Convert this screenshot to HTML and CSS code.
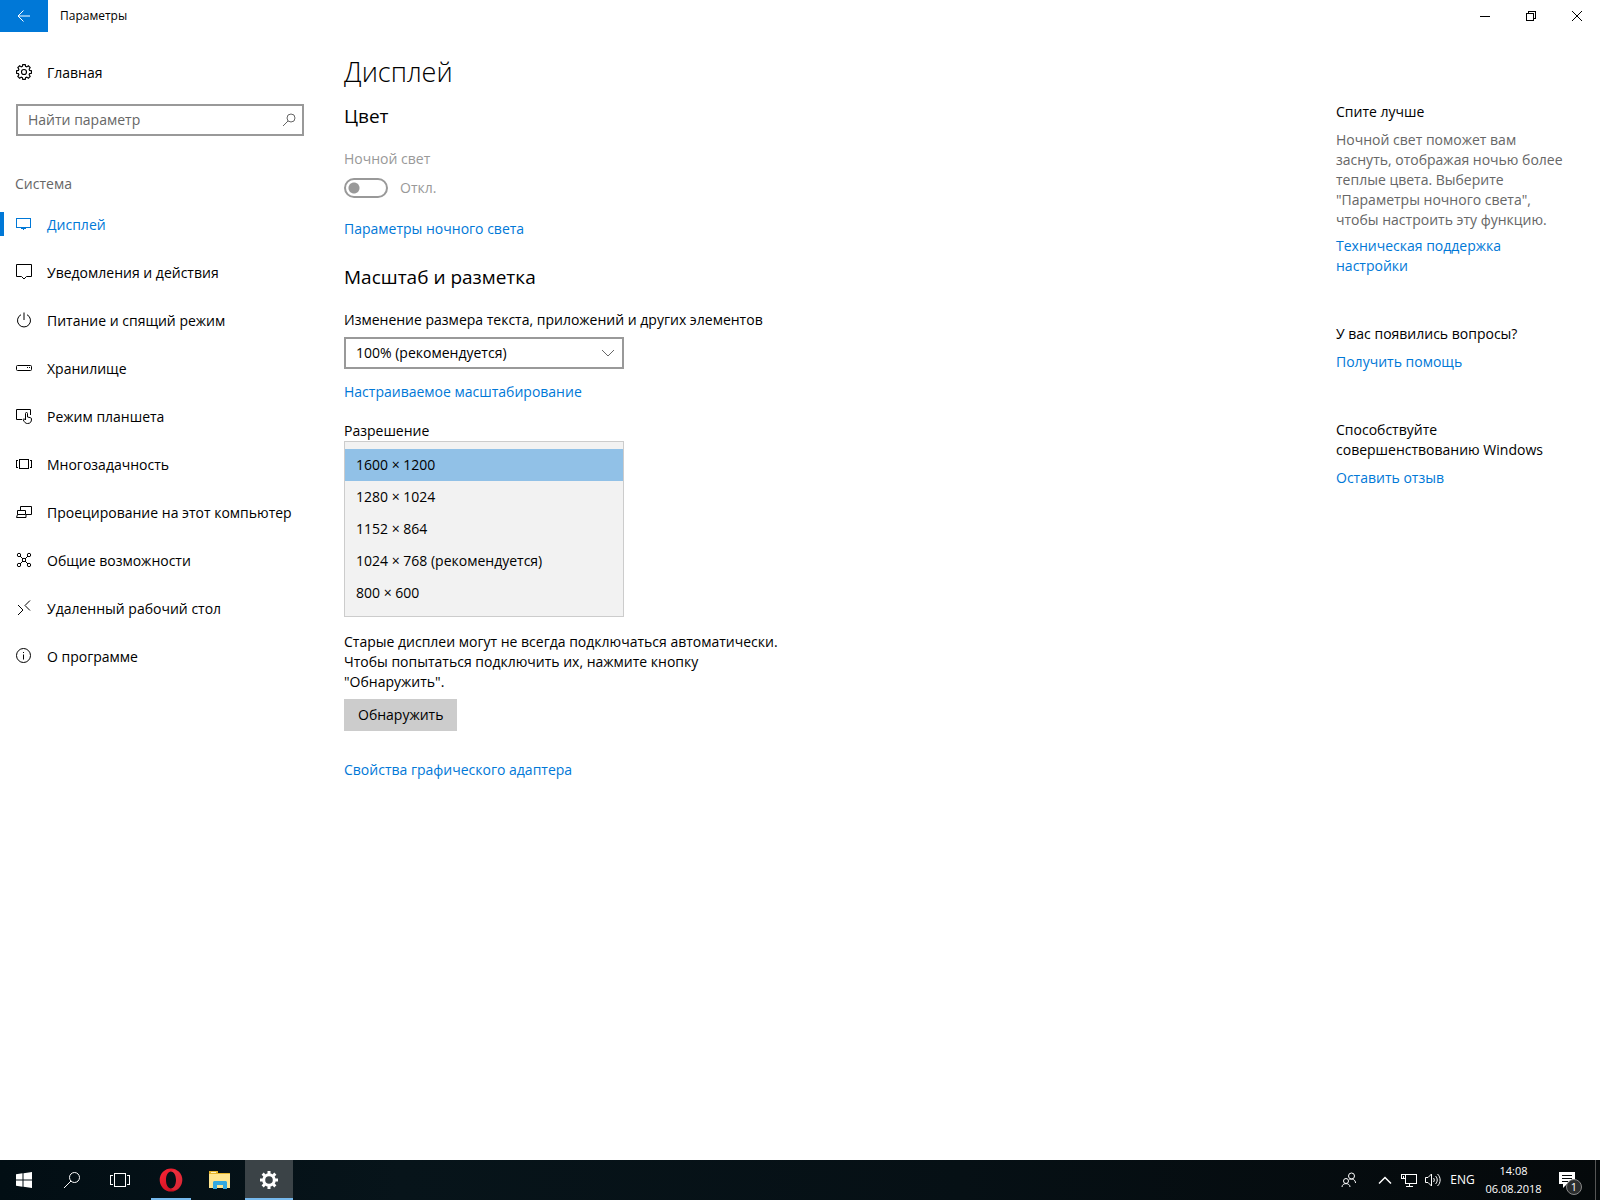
FILE: index.html
```html
<!DOCTYPE html>
<html lang="ru">
<head>
<meta charset="utf-8">
<title>Параметры</title>
<meta name="viewport" content="width=device-width, initial-scale=1">
<link rel="stylesheet" href="styles.css">
</head>
<body>
<header class="titlebar">
  <button class="back" type="button" aria-label="Назад">
    <svg class="icon" viewBox="0 0 16 16"><path d="M14 8H2.500M7.500 2.500L2 8l5.500 5.500"/></svg>
  </button>
  <span class="window-title">Параметры</span>
  <div class="window-controls">
    <button type="button" aria-label="Свернуть"><svg class="icon crisp" viewBox="0 0 16 16"><path d="M3 8.500h10"/></svg></button>
    <button type="button" aria-label="Восстановить"><svg class="icon crisp" viewBox="0 0 16 16"><path d="M3.500 5.500h7v7h-7zM5.500 5.500v-2h7v7h-2"/></svg></button>
    <button type="button" aria-label="Закрыть"><svg class="icon" viewBox="0 0 16 16"><path d="M3 3l10 10M13 3L3 13"/></svg></button>
  </div>
</header>

<div class="layout">
  <aside class="sidebar">
    <a class="nav-link" href="#home">
      <svg class="icon" viewBox="1 1 14 14"><path d="M6.600 3.100L6.900 1.500h2.200l.300 1.600 1 .400 1.400-.900 1.600 1.600-.900 1.400.400 1 1.600.300v2.200l-1.600.300-.400 1 .900 1.400-1.600 1.600-1.400-.900-1 .400-.300 1.600H6.900l-.300-1.600-1-.400-1.400.900-1.600-1.600.900-1.400-.400-1-1.600-.300V6.900l1.600-.300.400-1-.900-1.400 1.600-1.600 1.400.900z"/><circle cx="8" cy="8" r="2.200"/></svg>
      <span>Главная</span>
    </a>
    <form class="search" role="search">
      <input type="search" placeholder="Найти параметр" aria-label="Найти параметр">
      <svg class="icon search-icon" viewBox="0 0 16 16"><circle cx="10" cy="6" r="4"/><path d="M7 9l-5 5"/></svg>
    </form>
    <h2 class="section-name">Система</h2>
    <nav>
      <a class="nav-link active" href="#display" aria-current="page"><svg class="icon crisp" viewBox="0 0 16 16"><path d="M.500 2.500h14v9H.500zM7.500 11.500v2M5 12.500h5"/></svg><span>Дисплей</span></a>
      <a class="nav-link" href="#notifications"><svg class="icon" viewBox="0 0 16 16"><path d="M.500.500h15v12h-5L8 15l-2.500-2.500h-5z"/></svg><span>Уведомления и действия</span></a>
      <a class="nav-link" href="#power"><svg class="icon" viewBox="0 0 16 16"><path d="M8 .500v7.500M5 2.700a6.500 6.500 0 1 0 6 0"/></svg><span>Питание и спящий режим</span></a>
      <a class="nav-link" href="#storage"><svg class="icon" viewBox="0 0 16 16"><rect x=".500" y="5.500" width="15" height="5" rx="1"/><path d="M11 7.500h1M13 7.500h1"/></svg><span>Хранилище</span></a>
      <a class="nav-link" href="#tablet"><svg class="icon" viewBox="0 0 16 16"><path d="M6 11.500H.500v-10h14V7"/><path d="M9.500 11V5.500a1 1 0 0 1 2 0V9l3 .700c.700.200 1 .600 1 1.300 0 3-1.200 4.500-4 4.500-2 0-2.800-1-4.500-4 .800-.800 1.700-.500 2.500.500z"/></svg><span>Режим планшета</span></a>
      <a class="nav-link" href="#multitasking"><svg class="icon crisp" viewBox="0 0 16 16"><path d="M3.500 3.500h9v9h-9zM2 4.500H.500v7H2M14 4.500h1.500v7H14"/></svg><span>Многозадачность</span></a>
      <a class="nav-link" href="#projecting"><svg class="icon" viewBox="0 0 16 16"><path d="M4.500 6V2.500h11v8H10M1.500 6.500h8v4h-8zM1.500 10.500l-1 3h9.500v-3"/></svg><span>Проецирование на этот компьютер</span></a>
      <a class="nav-link" href="#shared"><svg class="icon" viewBox="0 0 16 16"><circle cx="3" cy="3" r="1.700"/><circle cx="13" cy="3" r="1.700"/><circle cx="3" cy="13" r="1.700"/><circle cx="13" cy="13" r="1.700"/><circle cx="8" cy="8" r="1.700"/><path d="M4 4l3 3M12 4L9 7M4 12l3-3M12 12L9 9"/></svg><span>Общие возможности</span></a>
      <a class="nav-link" href="#remote"><svg class="icon" viewBox="0 0 16 16"><path d="M2 5l5 5-5 5M14 .500L9 5.500l5 5"/></svg><span>Удаленный рабочий стол</span></a>
      <a class="nav-link" href="#about"><svg class="icon" viewBox="0 0 16 16"><circle cx="7.500" cy="7.500" r="7"/><path d="M7.500 6.500v5M7.500 4v1"/></svg><span>О программе</span></a>
    </nav>
  </aside>

  <main class="content">
    <h1>Дисплей</h1>
    <section class="group">
      <h2>Цвет</h2>
      <label class="muted" for="night-light">Ночной свет</label>
      <div class="toggle-row">
        <input class="toggle" type="checkbox" role="switch" id="night-light" disabled>
        <span>Откл.</span>
      </div>
      <a href="#night-light-settings">Параметры ночного света</a>
    </section>
    <section class="group">
      <h2>Масштаб и разметка</h2>
      <label for="scale">Изменение размера текста, приложений и других элементов</label>
      <div class="combo">
        <select id="scale"><option>100% (рекомендуется)</option></select>
        <svg class="icon chevron" viewBox="0 0 16 16"><path d="M2 5l6 6 6-6"/></svg>
      </div>
      <a class="scaling-link" href="#custom-scaling">Настраиваемое масштабирование</a>
      <label for="resolution">Разрешение</label>
      <select class="listbox" id="resolution" size="5">
        <option selected>1600 × 1200</option>
        <option>1280 × 1024</option>
        <option>1152 × 864</option>
        <option>1024 × 768 (рекомендуется)</option>
        <option>800 × 600</option>
      </select>
      <p class="detect-text">Старые дисплеи могут не всегда подключаться автоматически. Чтобы попытаться подключить их, нажмите кнопку "Обнаружить".</p>
      <button class="detect" type="button">Обнаружить</button>
      <a href="#adapter">Свойства графического адаптера</a>
    </section>
  </main>

  <aside class="help">
    <section>
      <h3>Спите лучше</h3>
      <p>Ночной свет поможет вам заснуть, отображая ночью более теплые цвета. Выберите "Параметры ночного света", чтобы настроить эту функцию.</p>
      <a class="support" href="#support">Техническая поддержка настройки</a>
    </section>
    <section>
      <h3>У вас появились вопросы?</h3>
      <a href="#help">Получить помощь</a>
    </section>
    <section>
      <h3>Способствуйте совершенствованию Windows</h3>
      <a href="#feedback">Оставить отзыв</a>
    </section>
  </aside>
</div>

<footer class="taskbar">
  <div class="launch">
    <button type="button" aria-label="Пуск"><svg class="icon solid" viewBox="0 0 16 16"><path d="M0 2.200L6.500 1.300V7.500H0zM7.500 1.200L16 0v7.500H7.500zM0 8.500h6.500v6.200L0 13.800zM7.500 8.500H16V16l-8.500-1.200z"/></svg></button>
    <button type="button" aria-label="Поиск"><svg class="icon large" viewBox="0 0 20 20"><circle cx="12.500" cy="7.500" r="5"/><path d="M9 11l-7 7"/></svg></button>
    <button type="button" aria-label="Представление задач"><svg class="icon large crisp" viewBox="0 0 20 20"><path d="M4.500 3.500h11v13h-11zM3 5.500H.500v9H3M17 5.500h2.500v9H17"/></svg></button>
  </div>
  <div class="apps">
    <button class="running" type="button" aria-label="Opera">
      <svg class="app-icon" viewBox="0 0 24 24"><defs><linearGradient id="opera-red" x1="0" y1="0" x2="1" y2="1"><stop offset="0" stop-color="#ff2636"/><stop offset="1" stop-color="#b80b1c"/></linearGradient></defs><path fill="url(#opera-red)" fill-rule="evenodd" d="M12 .500a11.300 11.500 0 1 0 0 23 11.300 11.500 0 1 0 0-23zM12 3.500c3 0 5 3.600 5 8.500s-2 8.500-5 8.500-5-3.600-5-8.500 2-8.500 5-8.500z"/><path fill="#ff4b55" d="M12 3.500c2-2 5-2 7.500 0 5 4.800 5 12.200 0 17-2.500 2-5.500 2-7.500 0 3 0 5-3.600 5-8.500s-2-8.500-5-8.500z" opacity=".4"/></svg>
    </button>
    <button type="button" aria-label="Проводник">
      <svg class="app-icon" viewBox="0 0 24 24"><path fill="#e7b52c" d="M1 3h9v2h12v5H1z"/><path fill="#fff3bd" d="M3 4h5v1H3z"/><path fill="#ffe58f" d="M1 6h21v14H1z"/><path fill="#35a9df" d="M5 21v-7l1-1h12l1 1v7h-4v-4H9v4z"/></svg>
    </button>
    <button class="running current" type="button" aria-label="Параметры">
      <svg class="gear" viewBox="0 0 20 20"><circle cx="10" cy="10" r="5.300"/><path d="M16 10h3M14.240 14.240l2.120 2.120M10 16v3M5.760 14.240l-2.120 2.120M4 10H1M5.760 5.760L3.640 3.640M10 4V1M14.240 5.760l2.120-2.120"/></svg>
    </button>
  </div>
  <div class="tray">
    <button class="people" type="button" aria-label="Люди"><svg class="icon" viewBox="0 0 16 16"><circle cx="10.500" cy="4" r="3"/><circle cx="5" cy="9" r="2.500"/><path d="M1 15c0-4.500 8-4.500 8 0M8.500 7.500c3-1.300 6 .500 6 3.500"/></svg></button>
    <button class="tray-icon" type="button" aria-label="Скрытые значки"><svg class="icon" viewBox="0 0 16 16"><path stroke-width="1.500" d="M2 11.500l6-6 6 6"/></svg></button>
    <button class="tray-icon" type="button" aria-label="Сеть"><svg class="icon crisp" viewBox="0 0 16 16"><path d="M5 2.500h10.500v9h-11V7M8.500 11.500v3M5 14.500h7M.500 2.500h4v4h-4zM2.500 4v2"/></svg></button>
    <button class="tray-icon" type="button" aria-label="Громкость"><svg class="icon" viewBox="0 0 16 16"><path d="M.500 5.500H3l3.500-3.500v12L3 10.500H.500zM8.500 6c1 1.200 1 2.800 0 4M10.500 4c2.300 2.300 2.300 5.700 0 8M12.500 2c3.500 3.300 3.500 8.700 0 12"/></svg></button>
    <button class="language" type="button">ENG</button>
    <button class="clock" type="button"><time>14:08</time><time>06.08.2018</time></button>
    <button class="notifications" type="button" aria-label="Уведомления: 1"><svg class="icon solid" viewBox="0 0 16 16"><path d="M0 0h16v12H8l-4 4v-4H0z"/><path class="lines" d="M3 3.500h10M3 6.500h10M3 9.500h6"/></svg><span class="badge">1</span></button>
    <button class="show-desktop" type="button" aria-label="Показать рабочий стол"></button>
  </div>
</footer>
</body>
</html>
```
FILE: styles.css
```css
:root {
  --accent: #0078d7;
  --border: #999;
  --muted: #999;
  --secondary: #666;
}

* { box-sizing: border-box; }

body {
  margin: 0;
  min-height: 100vh;
  display: flex;
  flex-direction: column;
  background: #fff;
  color: #000;
  font: 14px/20px "Open Sans", "Noto Sans", sans-serif;
}

h1, h2, h3, p { margin: 0; font-weight: 400; }
button, input, select { font: inherit; color: inherit; border: 0; border-radius: 0; margin: 0; }
button { padding: 0; background: none; }
a { color: var(--accent); text-decoration: none; }

.icon {
  width: 16px;
  height: 16px;
  flex: none;
  fill: none;
  stroke: currentColor;
}
.icon.large { width: 20px; height: 20px; }
.icon.solid { fill: currentColor; stroke: none; }
.crisp { shape-rendering: crispEdges; }

/* Title bar */
.titlebar { display: flex; align-items: center; height: 32px; font-size: 12px; }
.titlebar button { display: grid; place-items: center; height: 32px; }
.back { width: 48px; background: var(--accent); color: #fff; }
.window-title { margin-left: 12px; }
.window-controls { display: flex; margin-left: auto; }
.window-controls button { width: 46px; }

/* Page columns */
.layout {
  flex: 1;
  display: grid;
  grid-template-columns: 320px 1fr 264px;
}

/* Navigation */
.sidebar { padding-top: 16px; }
.nav-link {
  display: flex;
  align-items: center;
  gap: 15px;
  height: 48px;
  padding-left: 16px;
  color: #000;
}
.nav-link span { padding-top: 2px; }
.nav-link.active {
  color: var(--accent);
  background: linear-gradient(var(--accent), var(--accent)) 0 center / 4px 24px no-repeat;
}
.search { display: grid; align-items: center; margin: 8px 16px 38px; }
.search > * { grid-area: 1 / 1; }
.search input {
  width: 100%;
  height: 32px;
  padding: 0 40px 2px 10px;
  border: 2px solid var(--border);
  background: #fff;
  outline: 0;
  appearance: none;
}
.search input::placeholder { color: var(--secondary); opacity: 1; }
.search-icon { justify-self: end; margin-right: 7px; color: var(--secondary); }
.section-name { margin: 0 0 6px 15px; font-size: 14px; color: var(--secondary); }

/* Settings */
.content { padding: 22px 24px 32px; }
h1 { font-size: 27px; line-height: 36px; font-weight: 300; margin-bottom: 12px; }
.group { display: flex; flex-direction: column; align-items: flex-start; margin-bottom: 24px; }
.group h2 { font-size: 19px; line-height: 28px; margin-bottom: 19px; }
.muted { color: var(--muted); }
.toggle-row { display: flex; align-items: center; gap: 12px; margin: 9px 0 21px; height: 20px; color: var(--muted); }
.toggle {
  appearance: none;
  width: 44px;
  height: 20px;
  border: 2px solid var(--border);
  border-radius: 10px;
  background: radial-gradient(circle at 8px 8px, var(--border) 5px, transparent 6px);
}
.combo { display: grid; align-items: center; width: 280px; margin: 7px 0 13px; }
.combo > * { grid-area: 1 / 1; }
.combo select {
  appearance: none;
  height: 32px;
  padding: 0 32px 0 10px;
  border: 2px solid var(--border);
  background: #fff;
}
.chevron { justify-self: end; margin-right: 8px; color: var(--secondary); pointer-events: none; }
.scaling-link { margin-bottom: 19px; }
.listbox {
  appearance: none;
  width: 280px;
  height: 176px;
  padding: 7px 0;
  border: 1px solid #ccc;
  background: #f2f2f2;
  overflow: hidden;
  outline: 0;
}
.listbox option { height: 32px; padding: 6px 11px; line-height: 20px; color: #000; }
.listbox option:checked { background: #91c1e7 linear-gradient(#91c1e7, #91c1e7); color: #000; }
.detect-text { max-width: 440px; margin: 15px 0 7px; }
.detect { height: 32px; padding: 0 14px; margin-bottom: 29px; background: #ccc; }

/* Help column */
.help { display: flex; flex-direction: column; gap: 48px; padding: 70px 32px 32px 0; }
.help section { display: flex; flex-direction: column; gap: 8px; }
.help h3 { font-size: 14px; }
.help p { color: var(--secondary); }
.help .support { margin-top: -2px; max-width: 200px; }

/* Taskbar */
.taskbar {
  display: flex;
  justify-content: space-between;
  height: 40px;
  background: linear-gradient(90deg, #020e14, #07141a 25%, #061015 60%, #05090b);
  color: #fff;
  font-size: 12px;
}
.taskbar button { display: grid; place-items: center; height: 40px; }
.launch, .apps, .tray { display: flex; }
.launch button, .apps button { width: 48px; }
.apps { gap: 1px; margin: 0 auto 0 3px; }
.running { background: linear-gradient(#76b9ed, #76b9ed) center bottom / 40px 2px no-repeat; }
.running.current { background-size: 48px 2px; background-color: #3b4347; }
.app-icon { width: 24px; height: 24px; }
.gear { width: 20px; height: 20px; fill: none; stroke: #fff; stroke-width: 3; }
.people { width: 48px; }
.tray-icon { width: 24px; }
.language { width: 35px; }
.taskbar .clock { width: 67px; line-height: 18px; align-content: center; font-size: 11px; }
.notifications { position: relative; width: 48px; }
.notifications .icon { margin-right: 8px; }
.lines { stroke: #05090b; }
.badge {
  position: absolute;
  left: 19px;
  top: 19px;
  width: 16px;
  height: 16px;
  border: 1px solid #888;
  border-radius: 50%;
  background: #2b2d2e;
  font-size: 11px;
  line-height: 14px;
}
.show-desktop { width: 5px; border-left: 1px solid #555; }
```
